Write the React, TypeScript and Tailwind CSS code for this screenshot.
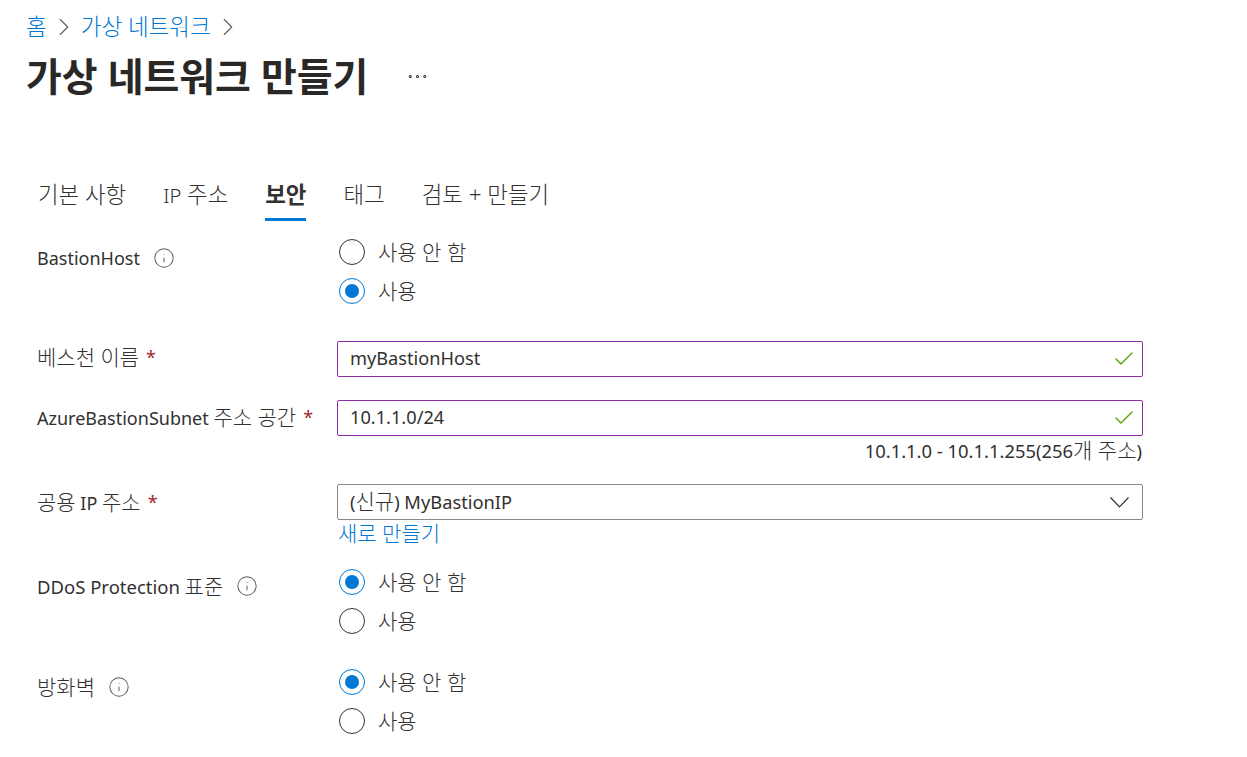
import { ChevronRight, Check, Info, MoreHorizontal } from "lucide-react"

const font = '"Noto Sans", "Noto Sans CJK KR", sans-serif'

// Hangul runs larger than the Latin around them
function Ko({ children }: { children: string }) {
  return <span className="text-[21px] font-light leading-[26px]">{children}</span>
}

function Radio({ label, checked }: { label: string; checked?: boolean }) {
  return (
    <div className="flex h-[26px] items-center gap-[13px]">
      {checked ? (
        <span className="flex h-[26px] w-[26px] items-center justify-center rounded-full border border-[#0078d4]">
          <span className="h-[14px] w-[14px] rounded-full bg-[#0078d4]" />
        </span>
      ) : (
        <span className="h-[26px] w-[26px] rounded-full border border-[#323130]" />
      )}
      <span className="text-[21px] font-light leading-[26px] text-[#323130]">{label}</span>
    </div>
  )
}

function RadioGroup({ value }: { value: "off" | "on" }) {
  return (
    <div className="ml-[2px] flex flex-col gap-[13px]">
      <Radio label="사용 안 함" checked={value === "off"} />
      <Radio label="사용" checked={value === "on"} />
    </div>
  )
}

function Label({ children, required, info }: { children: React.ReactNode; required?: boolean; info?: boolean }) {
  return (
    <div className="flex h-[26px] items-center text-[18px] leading-[26px] text-[#323130]">
      <span>{children}</span>
      {required && <span className="ml-[7px] text-[#a4262c]">*</span>}
      {info && <Info size={22} strokeWidth={1.1} className="ml-[13px] text-[#605e5c]" />}
    </div>
  )
}

function ValidInput({ value }: { value: string }) {
  return (
    <div className="flex h-[36px] items-center justify-between rounded-[2px] border border-[#8e2ba6] pl-[12px] pr-[6px] text-[18.2px] text-[#323130]">
      <span className="pb-[1px]">{value}</span>
      <Check size={24} strokeWidth={1.4} className="text-[#57a300]" />
    </div>
  )
}

export default function App() {
  return (
    <div className="h-[757px] w-[1247px] overflow-hidden bg-white" style={{ fontFamily: font }}>
      {/* Header */}
      <div className="mt-[14px] flex h-[26px] items-center pl-[26px] text-[22.5px] font-light text-[#0078d4]">
        <span>홈</span>
        <ChevronRight size={30} strokeWidth={0.9} className="mx-[2px] text-[#605e5c]" />
        <span>가상 네트워크</span>
        <ChevronRight size={30} strokeWidth={0.9} className="mx-[2px] text-[#605e5c]" />
      </div>
      <div className="mt-[13px] flex h-[46px] items-center pl-[26px]">
        <h1 className="text-[38.9px] font-bold leading-[46px] text-[#292827]">가상 네트워크 만들기</h1>
        <MoreHorizontal size={25} strokeWidth={1} className="ml-[37px] text-[#323130]" />
      </div>

      {/* Tabs */}
      <div className="mt-[78px] flex h-[44px] gap-[37px] pl-[38px] text-[22.4px] text-[#323130]">
        <span className="font-light leading-[36px]">기본 사항</span>
        <span className="font-light leading-[36px]"><span className="text-[20px]">IP</span> 주소</span>
        <span className="h-[44px] border-b-[3px] border-[#0078d4] font-bold leading-[36px]">보안</span>
        <span className="font-light leading-[36px]">태그</span>
        <span className="font-light leading-[36px]">검토 + 만들기</span>
      </div>

      {/* Form */}
      <div className="pl-[37px]">
        <div className="mt-[18px] grid grid-cols-[300px_806px]">
          <div className="pt-[6px]"><Label info>BastionHost</Label></div>
          <RadioGroup value="on" />
        </div>
        <div className="mt-[37px] grid grid-cols-[300px_806px]">
          <div className="pt-[3px]"><Label required><Ko>베스천 이름</Ko></Label></div>
          <ValidInput value="myBastionHost" />
        </div>
        <div className="mt-[23px] grid grid-cols-[300px_806px]">
          <div className="pt-[4px]"><Label required>AzureBastionSubnet <Ko>주소 공간</Ko></Label></div>
          <div>
            <ValidInput value="10.1.1.0/24" />
            <div className="h-[30px] pr-[1px] text-right text-[18.4px] leading-[30px] text-[#323130]">10.1.1.0 - 10.1.1.255(256<Ko>개 주소</Ko>)</div>
          </div>
        </div>
        <div className="mt-[18px] grid grid-cols-[300px_806px]">
          <div className="pt-[5px]"><Label required><Ko>공용</Ko> IP <Ko>주소</Ko></Label></div>
          <div>
            <div className="flex h-[36px] items-center justify-between rounded-[2px] border border-[#8a8886] pl-[12px] pr-[13px] text-[18.3px] text-[#323130]">
              <span className="pb-[1px]">(<Ko>신규</Ko>) MyBastionIP</span>
              <svg width="19" height="11" viewBox="0 0 19 11" fill="none" stroke="#323130" strokeWidth="1.2">
                <path d="M0.5 0.5 L9.5 9.8 L18.5 0.5" />
              </svg>
            </div>
            <div className="ml-[1px] h-[26px] text-[21px] font-light leading-[26px] text-[#0078d4]">새로 만들기</div>
          </div>
        </div>
        <div className="mt-[23px] grid grid-cols-[300px_806px]">
          <div className="pt-[4px]"><Label info><span className="text-[18.5px]">DDoS Protection</span> <Ko>표준</Ko></Label></div>
          <RadioGroup value="off" />
        </div>
        <div className="mt-[35px] grid grid-cols-[300px_806px]">
          <div className="pt-[5px]"><Label info><Ko>방화벽</Ko></Label></div>
          <RadioGroup value="off" />
        </div>
      </div>
    </div>
  )
}
